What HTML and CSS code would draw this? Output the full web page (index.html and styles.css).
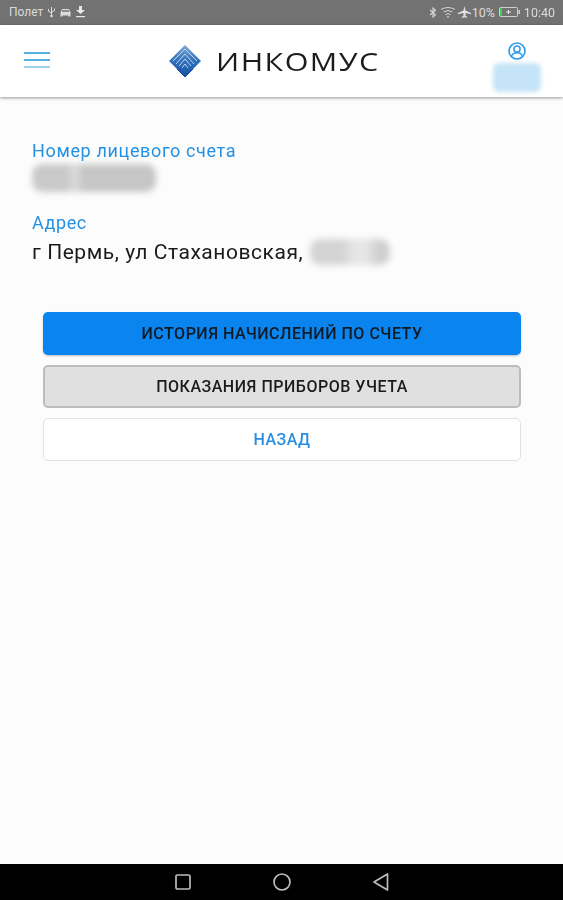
FILE: index.html
```html
<!DOCTYPE html>
<html lang="ru">
<head>
<meta charset="utf-8">
<title>Инкомус</title>
<link rel="stylesheet" href="styles.css">
</head>
<body>
<div class="app">
  <div class="status">
    <div class="status-left">
      <span>Полет</span>
      <svg width="9" height="12" viewBox="0 0 9 12"><path d="M4.500 1V10M1.500 3V5.200L4.500 7M7.500 2.500V4.500L4.500 6.200" fill="none" stroke="#dcdcdc" stroke-width="1"/><circle cx="4.500" cy="10" r="1.300" fill="#dcdcdc"/></svg>
      <svg width="11" height="9" viewBox="0 0 11 9"><path d="M2.200 1H8.800L10.500 4.200V8.500H8.500V7.500H2.500V8.500H0.500V4.200Z" fill="#dcdcdc"/><rect x="2" y="2" width="7" height="2" fill="#8a8a8a"/></svg>
      <svg width="11" height="12" viewBox="0 0 11 12"><path d="M4 0H7V4H10L5.500 8L1 4H4Z" fill="#e8e8e8"/><rect x="1" y="10" width="9" height="1.200" fill="#e8e8e8"/></svg>
    </div>
    <div class="status-right">
      <svg width="8" height="11" viewBox="0 0 8 11"><path d="M1 3L6.500 7.800L4 10V1L6.500 3.200L1 8" fill="none" stroke="#d6d6d6" stroke-width="1.100"/></svg>
      <svg class="wifi" width="16" height="11" viewBox="0 0 16 11"><path d="M1 2.500Q8 -1.500 15 2.500M3.500 5Q8 2 12.500 5M5.500 7.500Q8 5.800 10.500 7.500" fill="none" stroke="#d6d6d6" stroke-width="1"/><circle cx="8" cy="9.800" r="0.900" fill="#d6d6d6"/></svg>
      <svg width="13" height="12" viewBox="0 0 12 11"><path d="M6 0L7 4L12 6.500V7.500L7 6.500V9L8.500 10V11L6 10.300L3.500 11V10L5 9V6.500L0 7.500V6.500L5 4Z" fill="#e0e0e0"/></svg>
      <span class="pct">10%</span>
      <svg class="bat" width="21" height="10" viewBox="0 0 21 10"><rect x="0.500" y="0.500" width="18" height="9" rx="1" fill="none" stroke="#d0d0d0"/><rect x="1" y="1" width="2" height="8" fill="#3ecf5a"/><rect x="19.500" y="3" width="1.500" height="4" fill="#d0d0d0"/><path d="M7 5H12M9.500 3V7" stroke="#e8e8e8" fill="none"/></svg>
      <span class="time">10:40</span>
    </div>
  </div>

  <header class="topbar">
    <div class="burger"><i></i><i></i><i></i></div>
    <div class="logo">
      <svg width="34" height="34" viewBox="0 0 34 34">
        <defs><linearGradient id="lg" x1="0" y1="0" x2="0" y2="1"><stop offset="0" stop-color="#7fa9d6"/><stop offset="0.5" stop-color="#2f71bb"/><stop offset="1" stop-color="#1550a3"/></linearGradient></defs>
        <path d="M17 1L33 17L17 33L1 17Z" fill="url(#lg)"/>
        <path d="M5 17L17 5L29 17M8 20L17 10L26 20M11 22L17 15L23 22M14 24L17 20L20 24" fill="none" stroke="#b9d4ee" stroke-width="1"/>
        <path d="M17 33L9 25M17 33L25 25" fill="none" stroke="#0f4796" stroke-width="1"/>
      </svg>
      <span class="logo-text">ИНКОМУС</span>
    </div>
    <div class="user">
      <svg width="18" height="18" viewBox="0 0 18 18"><circle cx="9" cy="9" r="8" fill="none" stroke="#2c9ce8" stroke-width="1.600"/><circle cx="9" cy="7" r="3.100" fill="none" stroke="#2c9ce8" stroke-width="1.500"/><path d="M3.500 14.500Q4.500 10.800 9 10.800Q13.500 10.800 14.500 14.500" fill="none" stroke="#2c9ce8" stroke-width="1.500"/></svg>
      <div class="user-blur"></div>
    </div>
  </header>

  <main class="content">
    <div class="label">Номер лицевого счета</div>
    <div class="blur-row"><div class="blur acct"></div></div>
    <div class="label">Адрес</div>
    <div class="addr"><span>г Пермь, ул Стахановская,</span><div class="blur house"></div></div>
    <div class="buttons">
      <button class="btn primary">История начислений по счету</button>
      <button class="btn secondary">Показания приборов учета</button>
      <button class="btn plain">Назад</button>
    </div>
  </main>

  <footer class="nav">
    <svg width="18" height="18" viewBox="0 0 18 18"><rect x="2" y="2" width="14" height="14" rx="1.500" fill="none" stroke="#bcbcbc" stroke-width="1.700"/></svg>
    <svg width="20" height="20" viewBox="0 0 20 20"><circle cx="10" cy="10" r="8" fill="none" stroke="#bcbcbc" stroke-width="1.700"/></svg>
    <svg width="18" height="20" viewBox="0 0 18 20"><path d="M15.500 2V18L2 10Z" fill="none" stroke="#bcbcbc" stroke-width="1.700" stroke-linejoin="round"/></svg>
  </footer>
</div>
</body>
</html>
```

FILE: styles.css
```css
* { box-sizing: border-box; }
html, body { margin: 0; padding: 0; }
body { font-family: Roboto, "Liberation Sans", sans-serif; background: #fcfcfc; }
.app { width: 563px; height: 900px; display: flex; flex-direction: column; overflow: hidden; filter: blur(0.45px); }

.status { height: 25px; flex: none; background: #727272; display: flex; justify-content: space-between; align-items: center; padding: 0 8px 1px 9px; color: #dcdcdc; font-size: 12px; }
.status-left, .status-right { display: flex; align-items: center; }
.status-left { gap: 4px; }
.status-right { gap: 1px; }
.status-right .wifi { margin: 0 1px 0 2px; }
.status-right .bat { margin: 0 3px 0 3px; }
.status-right .time { font-size: 12.500px; }
.status-right .pct { font-size: 12.500px; }

.topbar { height: 72px; flex: none; background: #fff; box-shadow: 0 1px 3px rgba(0,0,0,0.4); display: flex; align-items: center; padding: 0 20px 0 24px; position: relative; }
.burger { width: 26px; display: flex; flex-direction: column; gap: 5px; margin-bottom: 2px; }
.burger i { display: block; height: 2px; background: #55b0e2; }
.burger i:last-child { background: #9fd0ee; }
.logo { display: flex; align-items: center; gap: 14px; margin-left: 118px; margin-bottom: 1px; }
.logo-text { font-family: "Open Sans", sans-serif; font-size: 25px; font-weight: 400; color: #1c1c1c; letter-spacing: 1.200px; transform: scaleX(1.220); transform-origin: left center; }
.user { margin-left: auto; width: 52px; display: flex; flex-direction: column; align-items: center; gap: 3px; margin-top: 11px; }
.user-blur { width: 48px; height: 29px; background: #c6e4f7; border-radius: 6px; filter: blur(2px); }

.content { flex: 1; padding: 43px 32px 0 32px; }
.label { color: #2491e4; font-size: 18px; line-height: 22px; letter-spacing: 0.650px; }
.blur-row { height: 50px; display: flex; align-items: flex-start; padding-top: 2px; }
.blur { border-radius: 10px; filter: blur(3px); }
.acct { width: 124px; height: 28px; background: linear-gradient(90deg, #c9c9c9 0 28%, #dcdcdc 34%, #c6c6c6 42% 100%); }
.addr { display: flex; align-items: center; font-size: 21px; line-height: 30px; color: #1a1a1a; height: 30px; margin-top: 3px; letter-spacing: 0.550px; }
.house { width: 80px; height: 26px; margin-left: 7px; background: linear-gradient(90deg, #d4d4d4 0 40%, #e6e6e6 55% 70%, #cfcfcf 85% 100%); }

.buttons { margin: 45px 10px 0 11px; display: flex; flex-direction: column; gap: 10px; }
.btn { display: block; width: 100%; height: 43px; border-radius: 5px; font-family: Roboto, sans-serif; font-size: 16px; font-weight: 500; text-transform: uppercase; letter-spacing: 0.520px; padding: 0; }
.primary { background: #0a84ee; border: none; color: #101a22; box-shadow: 0 1px 2px rgba(0,0,0,0.25); }
.secondary { background: #e0e0e0; border: 2px solid #bcbcbc; color: #1b1b1b; }
.plain { background: #fff; border: 1px solid #e2e2e2; color: #2a8ee2; }

.nav { height: 36px; flex: none; background: #000; display: flex; align-items: center; justify-content: center; gap: 80px; }
```
